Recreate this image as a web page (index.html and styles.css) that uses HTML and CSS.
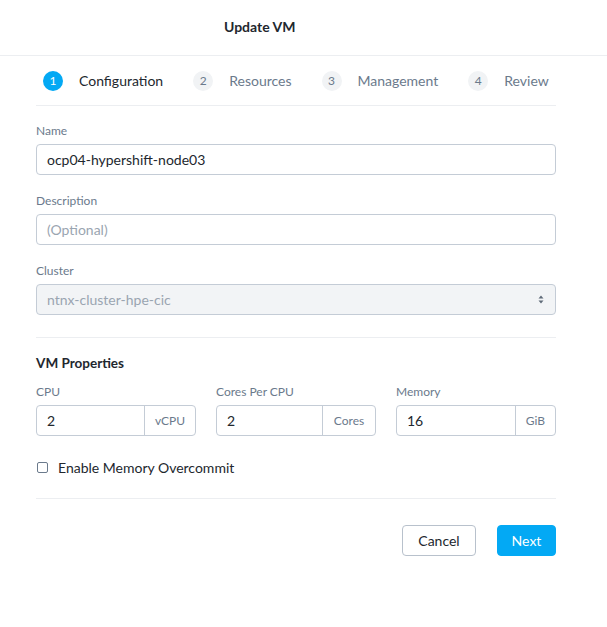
FILE: index.html
```html
<!DOCTYPE html>
<html>
<head>
<meta charset="utf-8">
<link rel="stylesheet" href="styles.css">
</head>
<body>
<div class="modal">
  <header class="head"><h1 class="title">Update VM</h1></header>
  <div class="body">
    <nav class="steps">
      <div class="step active"><span class="num">1</span><span class="lbl">Configuration</span></div>
      <div class="step"><span class="num">2</span><span class="lbl">Resources</span></div>
      <div class="step"><span class="num">3</span><span class="lbl">Management</span></div>
      <div class="step"><span class="num">4</span><span class="lbl">Review</span></div>
    </nav>
    <div class="field first">
      <label class="label">Name</label>
      <div class="input">ocp04-hypershift-node03</div>
    </div>
    <div class="field">
      <label class="label">Description</label>
      <div class="input placeholder">(Optional)</div>
    </div>
    <div class="field">
      <label class="label">Cluster</label>
      <div class="input select"><span>ntnx-cluster-hpe-cic</span>
        <svg class="caret" width="6" height="9" viewBox="0 0 6 9"><path d="M3 0.5L5.5 3.5H0.5Z M3 8.5L0.5 5.5H5.5Z" fill="#5f6b78"/></svg>
      </div>
    </div>
    <hr class="sep sep1">
    <h2 class="section">VM Properties</h2>
    <div class="props">
      <div class="prop">
        <label class="label">CPU</label>
        <div class="group"><span class="gval">2</span><span class="addon a1">vCPU</span></div>
      </div>
      <div class="prop">
        <label class="label">Cores Per CPU</label>
        <div class="group"><span class="gval">2</span><span class="addon a2">Cores</span></div>
      </div>
      <div class="prop">
        <label class="label">Memory</label>
        <div class="group"><span class="gval">16</span><span class="addon a3">GiB</span></div>
      </div>
    </div>
    <div class="check"><span class="box"></span><span class="ctext">Enable Memory Overcommit</span></div>
    <hr class="sep sep2">
    <div class="actions">
      <button class="btn cancel">Cancel</button>
      <button class="btn next">Next</button>
    </div>
  </div>
</div>
</body>
</html>
```
FILE: styles.css
```css
* { box-sizing: border-box; }
html, body { margin: 0; padding: 0; background: #fff; }
body { font-family: "Lato", "Open Sans", sans-serif; color: #22272e; width: 607px; height: 627px; overflow: hidden; }
.head { height: 56px; border-bottom: 1px solid #eceef1; display: flex; align-items: center; padding-left: 224px; padding-bottom: 3px; }
.title { margin: 0; font-size: 14px; font-weight: 700; color: #22272e; }
.body { padding: 0 51px 0 36px; }
.steps { height: 50px; border-bottom: 1px solid #eceef1; display: flex; align-items: center; padding-left: 7px; }
.step { display: flex; align-items: center; }
.step .num { width: 20px; height: 20px; border-radius: 50%; background: #f1f3f5; color: #6b7a8c; font-size: 12px; display: flex; align-items: center; justify-content: center; }
.step.active .num { background: #03a9f4; color: #fff; }
.step .lbl { margin-left: 16px; font-size: 14px; color: #6b7a8c; }
.step.active .lbl { color: #22272e; }
.step + .step { margin-left: 30px; }
.field { margin-top: 19px; }
.field.first { margin-top: 18px; }
.label { display: block; font-size: 12px; color: #6b7a8c; line-height: 14px; height: 14px; }
.input { margin-top: 6px; height: 31px; border: 1px solid #c4ccd6; border-radius: 4px; display: flex; align-items: center; padding: 0 10px; font-size: 14px; color: #22272e; }
.input.placeholder { color: #9aa5b1; }
.input.select { background: #f2f4f6; color: #9aa5b1; justify-content: space-between; }
.caret { margin-right: 1px; }
.sep { border: 0; border-top: 1px solid #eceef1; margin: 0; }
.sep1 { margin-top: 22px; }
.section { margin: 17px 0 0; font-size: 13.5px; font-weight: 700; color: #22272e; line-height: 16px; }
.props { display: flex; gap: 20px; margin-top: 14px; }
.prop { width: 160px; }
.group { margin-top: 6px; height: 31px; border: 1px solid #c4ccd6; border-radius: 4px; display: flex; }
.gval { flex: 1; display: flex; align-items: center; padding-left: 10px; font-size: 14px; }
.addon { border-left: 1px solid #c4ccd6; display: flex; align-items: center; justify-content: center; font-size: 12px; color: #6b7a8c; }
.a1 { width: 51px; }
.a2 { width: 53px; }
.a3 { width: 40px; }
.check { display: flex; align-items: center; margin-top: 20px; height: 22px; }
.box { width: 11px; height: 11px; border: 1px solid #6b7a8c; border-radius: 2px; margin-left: 1px; }
.ctext { margin-left: 10px; font-size: 14px; color: #22272e; }
.sep2 { margin-top: 20px; }
.actions { display: flex; justify-content: flex-end; gap: 21px; margin-top: 26px; }
.btn { height: 31px; border-radius: 4px; font-family: inherit; font-size: 14px; padding: 0; }
.cancel { width: 74px; background: #fff; border: 1px solid #b8c1cc; color: #22272e; }
.next { width: 59px; background: #03a9f4; border: 1px solid #03a9f4; color: #fff; }
```
